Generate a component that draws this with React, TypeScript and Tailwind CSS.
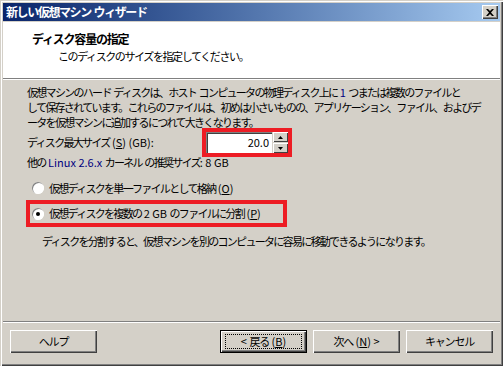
import React from 'react';

const font = { fontFamily: '"Noto Sans CJK JP", "MS UI Gothic", sans-serif' };

// latin runs keep normal spacing
function L({ children }: { children: React.ReactNode }) {
  return <span className="tracking-normal">{children}</span>;
}

function Btn({ children, focused }: { children: React.ReactNode; focused?: boolean }) {
  return (
    <div
      className={`h-[23px] w-[87px] flex items-center justify-center bg-[#d4d0c8] text-[11px] tracking-[-1.2px] whitespace-nowrap text-black ${
        focused
          ? 'border border-black shadow-[inset_1px_1px_0_#fff,inset_-1px_-1px_0_#404040,inset_-2px_-2px_0_#808080]'
          : 'shadow-[inset_1px_1px_0_#fff,inset_-1px_-1px_0_#404040,inset_-2px_-2px_0_#808080]'
      }`}
    >
      {focused ? (
        <div className="border border-dotted border-black w-[77px] h-[15px] flex items-center justify-center leading-none">{children}</div>
      ) : (
        <span className="leading-none">{children}</span>
      )}
    </div>
  );
}

export default function App() {
  return (
    <div
      className="w-[503px] h-[366px] bg-[#d4d0c8] flex flex-col p-[3px] shadow-[inset_1px_1px_0_#d4d0c8,inset_2px_2px_0_#fff,inset_-1px_-1px_0_#404040,inset_-2px_-2px_0_#808080] overflow-hidden"
      style={font}
    >
      {/* title bar */}
      <div className="h-[18px] flex items-center justify-between pl-[3px] pr-[2px] bg-gradient-to-r from-[#0a246a] to-[#a6caf0]">
        <span className="text-white font-bold text-[12px] tracking-[-1.4px] leading-none whitespace-nowrap">
          新しい仮想マシン<L> </L>ウィザード
        </span>
        <div className="w-[16px] h-[14px] bg-[#d4d0c8] flex items-center justify-center shadow-[inset_1px_1px_0_#fff,inset_-1px_-1px_0_#404040,inset_-2px_-2px_0_#808080]">
          <svg width="8" height="7" viewBox="0 0 8 7">
            <path d="M0 0h2l2 2 2-2h2L5 3.5 8 7H6L4 5 2 7H0l3-3.5z" fill="#000" />
          </svg>
        </div>
      </div>

      {/* header */}
      <div className="h-[56px] bg-white mt-[1px] flex flex-col pl-[29px] pt-[9px] text-black whitespace-nowrap">
        <div className="font-bold text-[12px] tracking-[-1.2px] leading-[16px]">ディスク容量の指定</div>
        <div className="text-[11px] tracking-[-1.4px] leading-[16px] pl-[26px] pt-[1px]">このディスクのサイズを指定してください。</div>
      </div>
      <div className="h-[1px] bg-[#808080]" />
      <div className="h-[1px] bg-white" />

      {/* body */}
      <div className="flex-1 flex flex-col pl-[24px] pr-[10px] pt-[5px] text-[11px] tracking-[-1.7px] text-black whitespace-nowrap">
        <p className="leading-[15px]">
          仮想マシンのハード<L> </L>ディスクは、ホスト<L> </L>コンピュータの物理ディスク上に<L> <span className="text-[#000080]">1</span> </L>つまたは複数のファイルと
          <br />
          して保存されています。これらのファイルは、初めは小さいものの、アプリケーション、ファイル、およびデ
          <br />
          ータを仮想マシンに追加するにつれて大きくなります。
        </p>

        <div className="flex items-center -mt-[2px] h-[29px]">
          <span className="w-[175px]">
            ディスク最大サイズ<L>&nbsp;(<span className="underline">S</span>)&nbsp;(GB):</L>
          </span>
          <div className="border-[4px] border-[#ed1c24] flex items-center">
            <div className="w-[66px] h-[21px] bg-white flex items-center justify-end pr-[3px] tracking-normal shadow-[inset_1px_1px_0_#808080,inset_2px_2px_0_#404040,inset_-1px_-1px_0_#fff]">
              20.0
            </div>
            <div className="flex flex-col ml-[1px]">
              <div className="w-[15px] h-[10px] bg-[#d4d0c8] flex items-center justify-center shadow-[inset_1px_1px_0_#fff,inset_-1px_-1px_0_#404040]">
                <svg width="5" height="3" viewBox="0 0 5 3"><path d="M2.5 0L5 3H0z" fill="#000" /></svg>
              </div>
              <div className="w-[15px] h-[10px] mt-[1px] bg-[#d4d0c8] flex items-center justify-center shadow-[inset_1px_1px_0_#fff,inset_-1px_-1px_0_#404040]">
                <svg width="5" height="3" viewBox="0 0 5 3"><path d="M0 0h5L2.5 3z" fill="#000" /></svg>
              </div>
            </div>
          </div>
        </div>
        <div className="leading-[15px] -mt-[2px]">
          他の<L>&nbsp;<span className="text-[#000080]">Linux 2.6.x</span>&nbsp;</L>カーネル<L>&nbsp;</L>の推奨サイズ<L>: 8 GB</L>
        </div>

        <div className="flex items-center gap-[5px] mt-[9px] pl-[5px] h-[18px]">
          <div className="w-[12px] h-[12px] rounded-full bg-white shadow-[inset_1px_1px_0_#808080,inset_-1px_-1px_0_#fff]" />
          <span>
            仮想ディスクを単一ファイルとして格納<L>&nbsp;(<span className="underline">O</span>)</L>
          </span>
        </div>
        <div className="mt-[3px] -ml-[1px] w-[261px] h-[27px] border-[4px] border-[#ed1c24] flex items-center gap-[5px] pl-[2px]">
          <div className="w-[12px] h-[12px] rounded-full bg-white flex items-center justify-center shadow-[inset_1px_1px_0_#808080,inset_-1px_-1px_0_#fff]">
            <div className="w-[4px] h-[4px] rounded-full bg-black" />
          </div>
          <span>
            仮想ディスクを複数の<L>&nbsp;2 GB&nbsp;</L>のファイルに分割<L>&nbsp;(<span className="underline">P</span>)</L>
          </span>
        </div>
        <div className="mt-[7px] pl-[15px] leading-[15px]">
          ディスクを分割すると、仮想マシンを別のコンピュータに容易に移動できるようになります。
        </div>
      </div>

      {/* footer */}
      <div className="h-[1px] bg-[#808080]" />
      <div className="h-[1px] bg-white" />
      <div className="h-[40px] flex items-center px-[7px] pb-[4px]">
        <Btn>ヘルプ</Btn>
        <div className="flex-1" />
        <div className="flex gap-[6px]">
          <Btn focused>
            <L>&lt;&nbsp;</L>戻る<L>&nbsp;(<span className="underline">B</span>)</L>
          </Btn>
          <Btn>
            次へ<L>&nbsp;(<span className="underline">N</span>)&nbsp;&gt;</L>
          </Btn>
          <Btn>キャンセル</Btn>
        </div>
      </div>
    </div>
  );
}
